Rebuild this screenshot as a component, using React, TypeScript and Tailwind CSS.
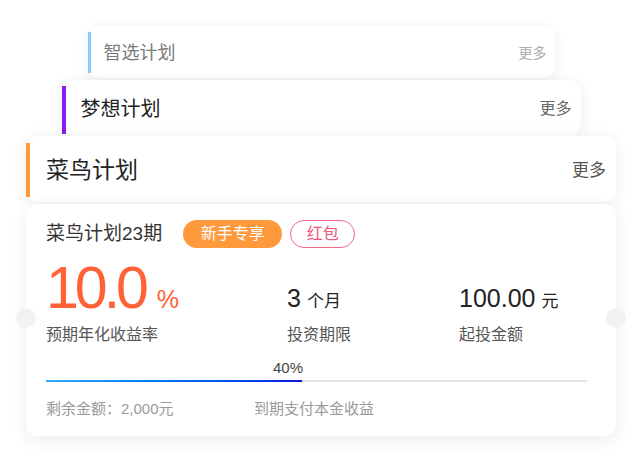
export default function App() {
  const font = { fontFamily: '"Liberation Sans", "Noto Sans CJK SC", sans-serif' };

  return (
    <div className="w-[642px] h-[462px] bg-white overflow-hidden" style={font}>
      <div className="flex flex-col items-center pt-[26px]">
        {/* 智选计划 */}
        <div className="w-[467px] h-[52px] bg-white rounded-xl shadow-[0_2px_14px_rgba(0,0,0,0.07)] flex items-center pr-2">
          <div className="w-[3px] self-stretch mt-[6px] mb-[5px] bg-[#8ccbff]"></div>
          <span className="ml-[13px] pt-[2px] text-[18px] text-[#7a7a7a] flex-1">智选计划</span>
          <span className="pt-[2px] text-[14px] text-[#acacac]">更多</span>
        </div>

        {/* 梦想计划 */}
        <div className="mt-[2px] w-[519px] h-[56px] bg-white rounded-xl shadow-[0_2px_14px_rgba(0,0,0,0.08)] flex items-center pr-[9px]">
          <div className="w-[4px] self-stretch mt-[6px] mb-[2px] bg-[#8a1cf5]"></div>
          <span className="ml-[15px] pt-[2px] text-[20px] text-[#222] flex-1">梦想计划</span>
          <span className="pt-[2px] text-[16px] text-[#666]">更多</span>
        </div>

        {/* 菜鸟计划 */}
        <div className="w-[590px] h-[66px] bg-white rounded-xl shadow-[0_2px_16px_rgba(0,0,0,0.08)] flex items-center pr-[10px]">
          <div className="w-[4px] self-stretch mt-[7px] mb-[5px] bg-[#ff9a38]"></div>
          <span className="ml-[16px] pt-[3px] text-[23px] text-[#222] flex-1">菜鸟计划</span>
          <span className="pt-[3px] text-[17px] text-[#555]">更多</span>
        </div>

        {/* 详情卡 */}
        <div className="relative mt-[2px] w-[590px] h-[232px] bg-white rounded-xl shadow-[0_4px_18px_rgba(0,0,0,0.08)] px-5 pt-4">
          <div className="absolute -left-[10px] top-[104px] w-5 h-5 rounded-full bg-[#f2f2f2]"></div>
          <div className="absolute -right-[10px] top-[104px] w-5 h-5 rounded-full bg-[#f2f2f2]"></div>

          <div className="flex items-center h-[28px]">
            <span className="pt-[1px] text-[19px] text-[#333]">菜鸟计划23期</span>
            <span className="ml-[21px] h-[28px] w-[99px] rounded-full bg-[#ff9a3c] text-white text-[16px] flex items-center justify-center">新手专享</span>
            <span className="ml-[8px] h-[28px] w-[65px] rounded-full border border-[#f06a86] text-[#f0557a] text-[16px] flex items-center justify-center">红包</span>
          </div>

          <div className="grid grid-cols-[241px_172px_1fr] mt-[11px]">
            <div>
              <div className="flex items-baseline text-[#ff6236] h-[54px]">
                <span className="text-[59px] leading-none tracking-[-4px]">10.0</span>
                <span className="ml-[12px] text-[25px] leading-none">%</span>
              </div>
              <div className="mt-[10px] text-[16px] leading-6 text-[#555]">预期年化收益率</div>
            </div>
            <div>
              <div className="flex items-end h-[54px] pb-[2px]">
                <div className="flex items-baseline text-[#222]">
                  <span className="text-[25px] leading-none">3</span>
                  <span className="ml-[6px] text-[17px] leading-none">个月</span>
                </div>
              </div>
              <div className="mt-[10px] text-[16px] leading-6 text-[#555]">投资期限</div>
            </div>
            <div>
              <div className="flex items-end h-[54px] pb-[2px]">
                <div className="flex items-baseline text-[#222]">
                  <span className="text-[25px] leading-none">100.00</span>
                  <span className="ml-[6px] text-[17px] leading-none">元</span>
                </div>
              </div>
              <div className="mt-[10px] text-[16px] leading-6 text-[#555]">起投金额</div>
            </div>
          </div>

          <div className="mt-[11px]">
            <div className="w-[257px] text-right text-[15px] text-[#444] leading-5">40%</div>
            <div className="mt-[2px] h-[2px] w-[541px] bg-[#e2e2e2]">
              <div className="h-[2px] w-[256px] bg-gradient-to-r from-[#33aaff] to-[#1010e0]"></div>
            </div>
          </div>

          <div className="mt-[15px] flex text-[15px] leading-6 text-[#9a9a9a]">
            <span className="w-[208px]">剩余金额：2,000元</span>
            <span>到期支付本金收益</span>
          </div>
        </div>
      </div>
    </div>
  );
}
